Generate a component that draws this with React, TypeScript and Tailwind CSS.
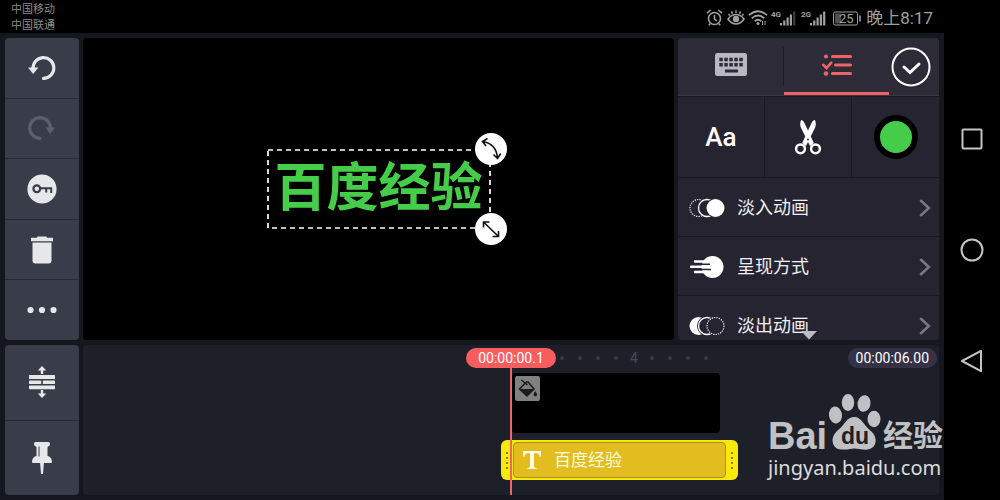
import type { ReactNode } from "react";

const editTools = [
  { label: "撤销", icon: <UndoIcon /> },
  { label: "重做", icon: <RedoIcon />, disabled: true },
  { label: "关键帧", icon: <KeyIcon /> },
  { label: "删除", icon: <TrashIcon /> },
  { label: "更多", icon: <MoreIcon /> },
];

const timelineTools = [
  { label: "展开轨道", icon: <TracksIcon /> },
  { label: "固定", icon: <PinIcon /> },
];

const animations = [
  { label: "淡入动画", icon: <FadeInIcon /> },
  { label: "呈现方式", icon: <MotionIcon /> },
  { label: "淡出动画", icon: <FadeOutIcon /> },
];

const rulerMarks = ["", "", "", "", "4", "", "", "", ""];

function UndoIcon() {
  return (
    <svg width="30" height="28" viewBox="0 0 30 28" aria-hidden="true">
      <path d="M6.100 15A10.400 10.400 0 1 1 16.500 24.400" fill="none" stroke="#e6e7ea" strokeWidth="3.200" strokeLinecap="round" />
      <path d="M1 13.600h10.400L6.200 20z" fill="#e6e7ea" />
    </svg>
  );
}

function RedoIcon() {
  return (
    <svg width="30" height="28" viewBox="0 0 30 28" aria-hidden="true">
      <path d="M23.400 15A10.400 10.400 0 1 0 13 24.400" fill="none" stroke="#5b606b" strokeWidth="3.200" strokeLinecap="round" />
      <path d="M18.200 13.600h10L23.200 20z" fill="#5b606b" />
    </svg>
  );
}

function KeyIcon() {
  return (
    <svg width="30" height="30" viewBox="0 0 30 30" aria-hidden="true">
      <circle cx="15" cy="15" r="14.600" fill="#e6e7e9" />
      <circle cx="9.800" cy="14.800" r="3.400" fill="none" stroke="#383d49" strokeWidth="2.200" />
      <path d="M13 14.300h11.200v4.600M19.200 14.300v4.200" fill="none" stroke="#383d49" strokeWidth="2" />
    </svg>
  );
}

function TrashIcon() {
  return (
    <svg width="24" height="28" viewBox="0 0 24 28" fill="#e6e7e9" aria-hidden="true">
      <path d="M7 1.800Q7 .6 8.200.6h7.600Q17 .6 17 1.800h5.400Q23 1.800 23 2.500V5.200H1V2.500Q1 1.800 1.600 1.800z" />
      <path d="M2.500 6.600h19v18.400q0 2.400-2.400 2.400H4.900q-2.400 0-2.400-2.400z" />
    </svg>
  );
}

function MoreIcon() {
  return (
    <svg width="30" height="8" viewBox="0 0 30 8" fill="#e6e7e9" aria-hidden="true">
      <circle cx="3.500" cy="4" r="3.100" />
      <circle cx="15" cy="4" r="3.100" />
      <circle cx="26.500" cy="4" r="3.100" />
    </svg>
  );
}

function TracksIcon() {
  return (
    <svg width="28" height="32" viewBox="0 0 28 32" fill="#e6e7e9" aria-hidden="true">
      <path d="M14 0l4.200 4.500h-3V8h-2.400V4.500h-3zM14 32l4.200-4.500h-3V24h-2.400v3.500h-3z" />
      <rect x="1" y="9" width="26" height="4" rx=".6" />
      <rect x="1" y="14.500" width="12.200" height="3.500" rx=".6" />
      <rect x="14.800" y="14.500" width="12.200" height="3.500" rx=".6" />
      <rect x="1" y="19.500" width="26" height="3.700" rx=".6" />
    </svg>
  );
}

function PinIcon() {
  return (
    <svg width="22" height="34" viewBox="0 0 22 34" aria-hidden="true">
      <path
        d="M4.500 1h13q1.500 0 1.500 2t-1.500 2.200q-1 .3-1 1.500v8q4.500 1.600 4.500 6.300 0 1-1 1H2q-1 0-1-1 0-4.700 4.500-6.300v-8q0-1.200-1-1.500Q3 5 3 3t1.500-2zM9 21h4l-1 12h-2z"
        fill="#e6e7e9"
      />
      <path d="M8 5.500v10" stroke="#383d49" strokeWidth="1" />
    </svg>
  );
}

function FadeInIcon() {
  return (
    <svg width="36" height="20" viewBox="0 0 36 20" aria-hidden="true">
      <circle cx="9.500" cy="10" r="8.500" fill="none" stroke="#fff" strokeWidth="1.200" strokeDasharray="1.200 1.200" />
      <circle cx="18" cy="10" r="8.500" fill="#262430" stroke="#fff" strokeWidth="1.300" />
      <circle cx="26.500" cy="10" r="10" fill="#262430" />
      <circle cx="26.500" cy="10" r="9" fill="#fff" />
    </svg>
  );
}

function FadeOutIcon() {
  return (
    <svg width="36" height="20" viewBox="0 0 36 20" aria-hidden="true">
      <circle cx="9.500" cy="10" r="9" fill="#fff" />
      <circle cx="18" cy="10" r="10" fill="#262430" />
      <circle cx="18" cy="10" r="8.500" fill="none" stroke="#fff" strokeWidth="1.300" />
      <circle cx="26.500" cy="10" r="9.500" fill="#262430" />
      <circle cx="26.500" cy="10" r="8.500" fill="none" stroke="#fff" strokeWidth="1.200" strokeDasharray="1.200 1.200" />
    </svg>
  );
}

function MotionIcon() {
  return (
    <svg width="36" height="24" viewBox="0 0 36 24" aria-hidden="true">
      <circle cx="23.500" cy="12" r="11" fill="#fff" />
      <path d="M11 9.200h10M12 14.500h10" stroke="#262430" strokeWidth="1.600" />
      <path d="M6 6.500h12M2 11.800h18M6 17h12" stroke="#fff" strokeWidth="2.400" strokeLinecap="round" />
    </svg>
  );
}

function KeyboardIcon() {
  return (
    <svg width="32" height="23" viewBox="0 0 32 23" aria-hidden="true">
      <rect width="32" height="23" rx="2.500" fill="#b9b7bf" />
      <path d="M4.300 6.500h24M4.300 11.800h24" stroke="#2e2b39" strokeWidth="3.600" strokeDasharray="3.500 1.500" />
      <path d="M10 18h13" stroke="#2e2b39" strokeWidth="3" />
    </svg>
  );
}

function ChecklistIcon() {
  return (
    <svg width="32" height="24" viewBox="0 0 32 24" fill="none" stroke="#ef6265" strokeLinecap="round" aria-hidden="true">
      <path d="M11.500 3.500h18M14.500 12h15M11.500 20.500h18" strokeWidth="3.200" />
      <path d="M2.200 11.800l3.300 3.200 4.800-5.400" strokeWidth="2.600" />
      <circle cx="5" cy="3.500" r="2.100" fill="#ef6265" stroke="none" />
      <circle cx="5" cy="20.500" r="2.300" fill="#ef6265" stroke="none" />
    </svg>
  );
}

function ScissorsIcon() {
  return (
    <svg width="28" height="36" viewBox="0 0 28 36" aria-hidden="true">
      <path d="M7.300.8Q9.500 1.600 10.500 4l9.300 20-3.800 3L6.800 8.500Q5.300 4 7.300.8z" fill="#fff" />
      <path d="M20.700.8Q18.500 1.600 17.500 4L8.200 24l3.800 3 9.200-18.500Q22.700 4 20.700.8z" fill="#fff" />
      <circle cx="14" cy="20.500" r=".9" fill="#262430" />
      <g fill="none" stroke="#fff" strokeWidth="2.500">
        <circle cx="6.500" cy="29.800" r="4.400" />
        <circle cx="21.500" cy="29.800" r="4.400" />
      </g>
    </svg>
  );
}

function ChevronIcon() {
  return (
    <svg width="12" height="18" viewBox="0 0 12 18" fill="none" stroke="#787585" strokeWidth="2.600" strokeLinecap="round" aria-hidden="true">
      <path d="M2 1.800L9.800 9 2 16.200" />
    </svg>
  );
}

function StatusIcons() {
  return (
    <svg width="156" height="20" viewBox="0 0 156 20" fill="none" stroke="#a0a0a0" strokeWidth="1.600" aria-hidden="true">
      {/* Alarm */}
      <circle cx="8.500" cy="10.500" r="6" />
      <path d="M8.500 7v4l2.200 1.800M1 5.200L4.600 2M16 5.200L12.400 2M4.300 15.500l-1.500 1.700M12.700 15.500l1.500 1.700" />
      {/* Eye comfort */}
      <path d="M22 11q3.500-4.500 8-4.500t8 4.500q-3.500 5-8 5t-8-5zM30 2.500v2.200M25.300 3.500l1.300 2.200M34.700 3.500l-1.300 2.200M22.500 6l1.500 1.500M37.500 6L36 7.500" />
      <circle cx="30" cy="11" r="3.200" fill="#a0a0a0" stroke="none" />
      {/* Wi-Fi */}
      <path d="M43 7.200Q52 -.8 61 7.200M45.800 10.300q6.200-5.500 12.400 0M48.700 13.200q3.300-2.800 6.600 0" strokeWidth="1.800" />
      <circle cx="52" cy="15.500" r="1.500" fill="#a0a0a0" stroke="none" />
      <path d="M56.500 17v-4M59 13v4" strokeWidth="1" />
      {/* Signal bars */}
      <g strokeWidth="2.200">
        <path d="M75 17.500v-2.500M78.300 17.500v-5M81.600 17.500v-8M84.900 17.500v-11" />
        <path d="M88.200 17.500v-14" stroke="#3c3c3c" />
        <path d="M105 17.500v-2.500M108.300 17.500v-5M111.600 17.500v-8M114.900 17.500v-11M118.200 17.500v-14" />
      </g>
      {/* Battery */}
      <rect x="127.500" y="4" width="24" height="13" rx="1.500" strokeWidth="1" />
      <path d="M129 5.500h6v10h-6z" fill="#505050" stroke="none" />
      <path d="M154 7.500v6" strokeWidth="1.600" />
      <g fill="#a0a0a0" stroke="none" fontFamily="Roboto, sans-serif">
        <text x="65" y="9" fontSize="8" fontWeight="700">4G</text>
        <text x="95" y="9" fontSize="8" fontWeight="700">2G</text>
        <text x="133" y="15" fontSize="13">25</text>
      </g>
    </svg>
  );
}

function ToolButton({ label, disabled, children }: { label: string; disabled?: boolean; children: ReactNode }) {
  return (
    <button
      type="button"
      aria-label={label}
      disabled={disabled}
      className="flex flex-1 items-center justify-center border-b border-[#272b34] bg-[#383d49] last:border-b-0"
    >
      {children}
    </button>
  );
}

function Preview() {
  return (
    <main className="flex items-center justify-center rounded bg-black">
      <div className="relative flex h-20 w-56 items-center justify-center">
        <svg className="absolute inset-0 h-full w-full" aria-hidden="true">
          <rect x="1" y="1" width="222" height="78" fill="none" stroke="#fff" strokeWidth="1.700" strokeDasharray="5 4" />
        </svg>
        <p className="text-[52px] leading-none font-bold whitespace-nowrap text-[#45cd49]">百度经验</p>
        <button type="button" aria-label="旋转" className="absolute -top-4 -right-4 size-8 rounded-full bg-white">
          <svg width="32" height="32" viewBox="0 0 32 32" fill="none" stroke="#111" strokeWidth="1.600" aria-hidden="true">
            <path d="M7.500 8.500Q21.500 10.500 22.500 25.500M12.500 5.500L7.500 8.500l3.500 4.500M18.500 21.500l4 4 3.200-5" />
          </svg>
        </button>
        <button type="button" aria-label="缩放" className="absolute -right-4 -bottom-4 size-8 rounded-full bg-white">
          <svg width="32" height="32" viewBox="0 0 32 32" fill="none" stroke="#111" strokeWidth="1.600" aria-hidden="true">
            <path d="M8.500 9l15 14.500M8.500 14.500V9h6M23.500 18v5.500h-6" />
          </svg>
        </button>
      </div>
    </main>
  );
}

function OptionsPanel() {
  return (
    <aside className="relative flex flex-col overflow-hidden rounded bg-[#262430]">
      <div className="flex h-[58px] shrink-0 items-stretch border-b border-[#3a3745] bg-[#2e2b39]">
        <button type="button" aria-label="键盘" className="flex flex-1 items-center justify-center pb-1">
          <KeyboardIcon />
        </button>
        <div className="my-[9px] w-px bg-[#1e1c26]" />
        <button type="button" aria-label="选项" className="flex flex-1 items-center justify-center border-b-3 border-[#ef6265]">
          <ChecklistIcon />
        </button>
        <button type="button" aria-label="完成" className="mr-2 flex items-center pl-[2px]">
          <svg width="40" height="40" viewBox="0 0 40 40" fill="none" stroke="#fff" aria-hidden="true">
            <circle cx="20" cy="20" r="18.500" strokeWidth="2" />
            <path d="M13 20l6 5.500 9-8.500" strokeWidth="3" strokeLinecap="round" />
          </svg>
        </button>
      </div>

      <div className="grid h-[82px] shrink-0 grid-cols-3 divide-x divide-[#191823] border-y border-[#191823]">
        <button type="button" className="font-[Roboto] text-[26px] font-medium text-white">
          Aa
        </button>
        <button type="button" aria-label="裁剪" className="flex items-center justify-center">
          <ScissorsIcon />
        </button>
        <button type="button" aria-label="颜色" className="flex items-center justify-center">
          <span className="size-11 rounded-full border-6 border-black bg-[#45cd49]" />
        </button>
      </div>

      <ul className="min-h-0 flex-1 overflow-hidden">
        {animations.map((item) => (
          <li key={item.label} className="border-b border-[#191823]">
            <button type="button" className="flex h-[58px] w-full items-center pt-[2px] pr-2 pl-[11px] text-left text-lg text-[#f0f0f3]">
              {item.icon}
              <span className="ml-3 flex-1">{item.label}</span>
              <ChevronIcon />
            </button>
          </li>
        ))}
      </ul>

      {/* More options below */}
      <svg className="absolute bottom-0 left-1/2 -translate-x-1/2" width="16" height="9" viewBox="0 0 16 9" aria-hidden="true">
        <path d="M0 0h16L8 8.500z" fill="#bdbcc2" />
      </svg>
    </aside>
  );
}

function ClipHandle() {
  return (
    <span className="flex w-3 flex-col items-center justify-center gap-[3px]">
      {[0, 1, 2, 3].map((i) => (
        <span key={i} className="size-[2px] bg-[#8a7c10]" />
      ))}
    </span>
  );
}

function Timeline() {
  return (
    <section className="relative col-span-2 overflow-hidden rounded bg-[#1e2029]">
      <div className="mt-[3px] grid h-5 grid-cols-[1fr_auto_1fr] items-center font-[Roboto] text-sm leading-5 text-white">
        <span />
        <span className="w-[90px] rounded-full bg-[#fb5d5f] text-center">00:00:00.1</span>
        <div className="flex items-center justify-between pr-[2px] pl-1">
          <div className="flex h-4 items-center gap-[14px] text-[#4a4758]">
            {rulerMarks.map((mark, i) => (
              <span key={i} className="flex w-1 justify-center">
                {mark || <span className="size-1 rounded-full bg-[#3a3846]" />}
              </span>
            ))}
          </div>
          <span className="rounded-full bg-[#353245] px-2">00:00:06.00</span>
        </div>
      </div>

      <div className="mt-[5px] pl-[50%]">
        <div className="ml-px h-[60px] w-52 rounded bg-black p-[3px]">
          <div className="flex size-[25px] items-center justify-center rounded-xs bg-[#808080]">
            <svg width="21" height="21" viewBox="0 0 21 21" aria-hidden="true">
              <path d="M9.500 4L2.500 11l7.500 7 7-7-6-7zM4.500 2l6 5" fill="none" stroke="#1c1c1c" strokeWidth="1.600" />
              <path d="M2.500 11h14.500l-7 7z" fill="#1c1c1c" />
              <path d="M18.300 13q2 2.700 1.800 4t-1.800 1.300-1.800-1.300 1.800-4z" fill="#1c1c1c" />
            </svg>
          </div>
        </div>
      </div>

      <div className="mt-[7px] pl-[calc(50%-10px)]">
        <div className="flex h-10 w-[237px] rounded-md bg-[#fbea08]">
          <ClipHandle />
          <div className="my-[2px] flex flex-1 items-center gap-3 rounded border border-[#a98f1b] bg-[#e3bd20] px-2 text-[#fffbe0]">
            <svg width="20" height="20" viewBox="0 0 20 20" fill="#fffbe6" aria-hidden="true">
              <path d="M1 1h18v5.500h-1.500Q17 3.200 14.500 3.200H12v13.300q0 1.300 2.500 1.500V19h-9v-1Q8 17.800 8 16.500V3.200H5.500Q3 3.200 2.500 6.500H1z" />
            </svg>
            <span className="text-[17px] leading-6">百度经验</span>
          </div>
          <ClipHandle />
        </div>
      </div>

      {/* Playhead */}
      <div className="absolute top-[22px] bottom-0 left-1/2 w-[2px] -translate-x-1/2 bg-[#e8686a]" />
    </section>
  );
}

function Watermark() {
  return (
    <div className="pointer-events-none absolute right-[55px] bottom-5 w-[177px]">
      <svg className="overflow-visible" width="177" height="62" viewBox="0 0 177 62" fill="#c0c1c4" aria-hidden="true">
        <text x="0" y="55" fontSize="38" fontWeight="700" fontFamily="'Liberation Sans', sans-serif">Bai</text>
        <ellipse cx="67.500" cy="21" rx="6.500" ry="8.500" transform="rotate(-8 67.500 21)" />
        <ellipse cx="80" cy="8.500" rx="6.200" ry="8.500" />
        <ellipse cx="96" cy="9.500" rx="6.500" ry="8.300" transform="rotate(10 96 9.500)" />
        <ellipse cx="106" cy="25" rx="6.500" ry="8.300" />
        <path d="M86.500 23Q91 23 95 28.500T104 38Q108.500 43 107.500 48.500T100 55.500Q96 56 91 55T82 55T71 55.300Q65 53.500 64.600 47.500T69 37Q74 33 77.500 28T86.500 23z" />
        <text x="73" y="50" fontSize="23" fontWeight="700" fill="#1e2029" fontFamily="'Liberation Sans', sans-serif">du</text>
        <text x="115" y="52" fontSize="30" fontWeight="700" fontFamily="'Noto Sans CJK SC', sans-serif">经验</text>
      </svg>
      <p className="font-['Noto_Sans'] text-xl leading-6 whitespace-nowrap text-[#dcdcde]">jingyan.baidu.com</p>
    </div>
  );
}

export default function App() {
  return (
    <div className="relative flex h-screen min-h-[480px] overflow-hidden bg-black font-[Roboto,'Noto_Sans_CJK_SC',sans-serif]">
      <div className="flex min-w-0 flex-1 flex-col">
        <header className="flex h-[33px] shrink-0 items-center justify-between px-[11px] pt-[2px] text-[#a0a0a0]">
          <div className="text-[11px] leading-4 text-[#8c8c8c]">
            <p>中国移动</p>
            <p>中国联通</p>
          </div>
          <div className="flex items-center gap-1">
            <StatusIcons />
            <time className="text-[17px] leading-5">晚上8:17</time>
          </div>
        </header>

        <div className="grid min-h-0 flex-1 grid-cols-[74px_1fr_261px] grid-rows-[302fr_150fr] gap-x-1 gap-y-[5px] bg-[#14171e] p-[5px]">
          <nav className="flex flex-col overflow-hidden rounded">
            {editTools.map((tool) => (
              <ToolButton key={tool.label} label={tool.label} disabled={tool.disabled}>
                {tool.icon}
              </ToolButton>
            ))}
          </nav>
          <Preview />
          <OptionsPanel />
          <nav className="flex flex-col overflow-hidden rounded">
            {timelineTools.map((tool) => (
              <ToolButton key={tool.label} label={tool.label}>
                {tool.icon}
              </ToolButton>
            ))}
          </nav>
          <Timeline />
        </div>
      </div>

      {/* System navigation */}
      <nav className="flex w-14 shrink-0 flex-col items-center justify-center gap-[87px]">
        <button type="button" aria-label="最近任务">
          <svg width="24" height="24" viewBox="0 0 24 24" fill="none" stroke="#c4c4c4" strokeWidth="2" aria-hidden="true">
            <rect x="2.500" y="2.500" width="19" height="19" rx="1" />
          </svg>
        </button>
        <button type="button" aria-label="主屏幕">
          <svg width="24" height="24" viewBox="0 0 24 24" fill="none" stroke="#c4c4c4" strokeWidth="2" aria-hidden="true">
            <circle cx="12" cy="12" r="10.500" />
          </svg>
        </button>
        <button type="button" aria-label="返回">
          <svg width="24" height="24" viewBox="0 0 24 24" fill="none" stroke="#c4c4c4" strokeWidth="2" strokeLinejoin="round" aria-hidden="true">
            <path d="M21 1.800v20.400L2 12z" />
          </svg>
        </button>
      </nav>

      <Watermark />
    </div>
  );
}
